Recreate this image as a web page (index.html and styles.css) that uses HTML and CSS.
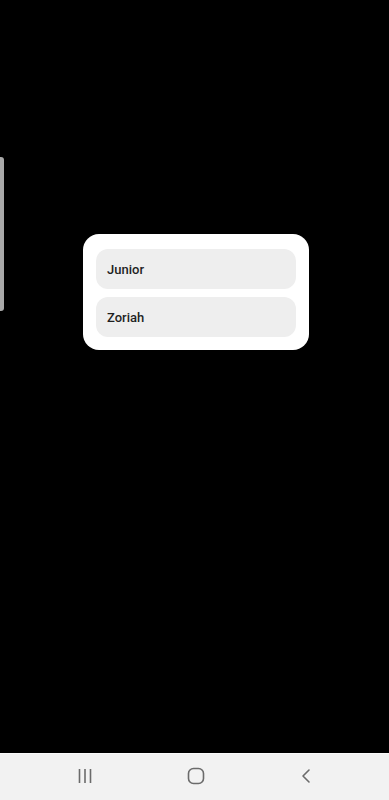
FILE: index.html
```html
<!DOCTYPE html>
<html lang="en">
<head>
    <meta charset="UTF-8">
    <meta name="viewport" content="width=device-width, initial-scale=1.0">
    <title>Choose profile</title>
    <link rel="stylesheet" href="styles.css">
</head>
<body>
    <div class="screen">
        <!-- edge panel handle -->
        <div class="edge-handle"></div>

        <div class="stage">
            <div class="picker">
                <button class="picker-item">Junior</button>
                <button class="picker-item">Zoriah</button>
            </div>
        </div>

        <!-- system navigation bar -->
        <nav class="nav-bar">
            <svg class="nav-icon" width="18" height="18" viewBox="0 0 18 18">
                <path d="M3.5 2v14M9 2v14M14.5 2v14" stroke="#6b6b6b" stroke-width="1.6" fill="none"/>
            </svg>
            <svg class="nav-icon" width="18" height="18" viewBox="0 0 18 18">
                <rect x="1.5" y="1.5" width="15" height="15" rx="5" stroke="#6b6b6b" stroke-width="1.6" fill="none"/>
            </svg>
            <svg class="nav-icon" width="18" height="18" viewBox="0 0 18 18">
                <path d="M12 3l-6 6 6 6" stroke="#6b6b6b" stroke-width="1.6" fill="none" stroke-linecap="round" stroke-linejoin="round"/>
            </svg>
        </nav>
    </div>
</body>
</html>
```

FILE: styles.css
```css
html, body {
    margin: 0;
    padding: 0;
    background: #000;
}

body {
    font-family: Roboto, "Noto Sans", sans-serif;
}

.screen {
    position: relative;
    width: 389px;
    height: 800px;
    display: flex;
    flex-direction: column;
    overflow: hidden;
}

/* thin grey tab on the left edge */
.edge-handle {
    position: absolute;
    left: 0;
    top: 157px;
    width: 4px;
    height: 154px;
    background: #a9a9a9;
    border-radius: 0 3px 3px 0;
}

.stage {
    flex: 1;
    padding-top: 234px;
    display: flex;
    justify-content: center;
    align-items: flex-start;
}

.picker {
    width: 226px;
    box-sizing: border-box;
    background: #fff;
    border-radius: 16px;
    padding: 15px 13px 13px;
    display: flex;
    flex-direction: column;
    gap: 8px;
    margin-left: 3px;
}

.picker-item {
    height: 40px;
    border: none;
    border-radius: 12px;
    background: #eeeeee;
    text-align: left;
    padding: 0 11px;
    font-family: inherit;
    font-size: 13px;
    font-weight: 500;
    color: #1f1f1f;
}

.nav-bar {
    height: 44px;
    flex-shrink: 0;
    background: #f2f2f2;
    border-top: 1px solid #fafafa;
    display: flex;
    align-items: center;
    justify-content: space-between;
    padding: 0 74px 2px 76px;
}

.nav-icon {
    display: block;
}
```
